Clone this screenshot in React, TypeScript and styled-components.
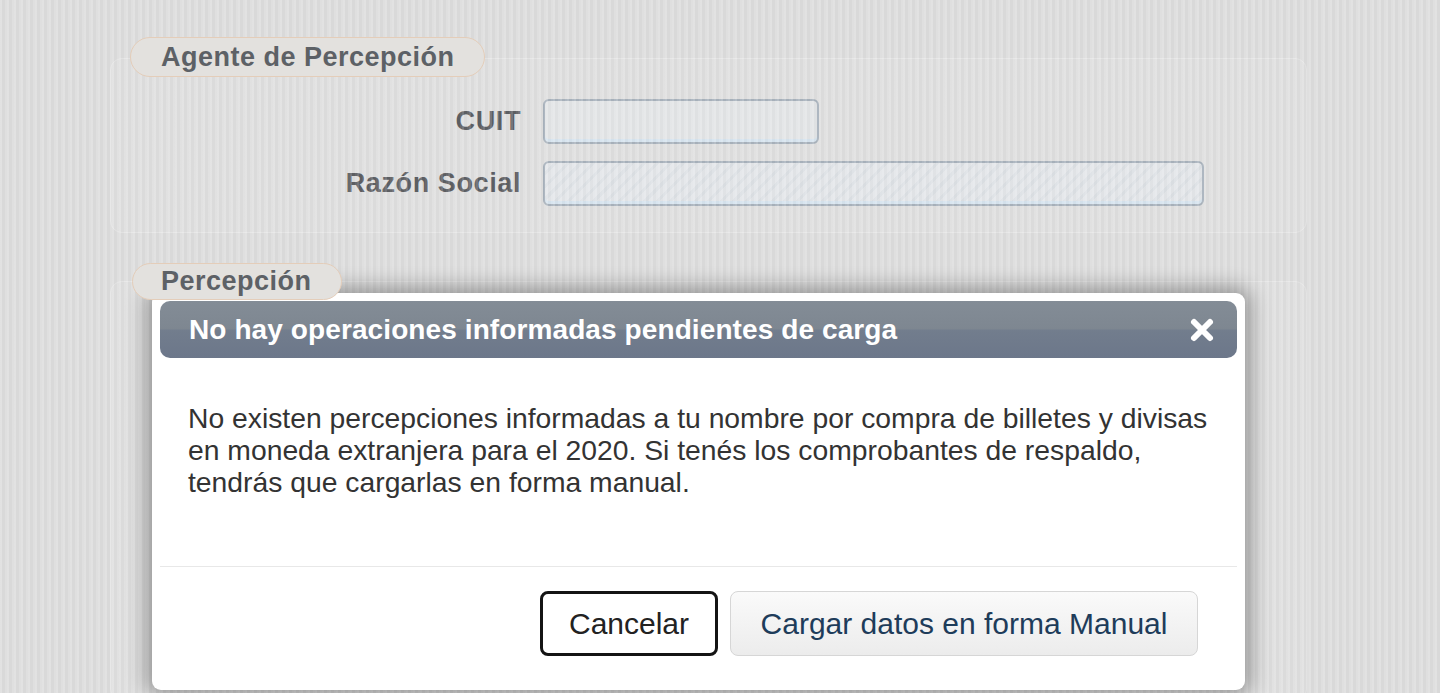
import React from "react";
import styled, { createGlobalStyle } from "styled-components";

const Global = createGlobalStyle`
  html, body { margin: 0; padding: 0; }
  body {
    width: 1440px;
    height: 693px;
    overflow: hidden;
    background: #dddddd;
    font-family: "Liberation Sans", Arial, sans-serif;
  }
`;

const Screen = styled.div`
  position: relative;
  width: 1440px;
  height: 693px;
  overflow: hidden;
  background: #dddddd;
`;

const Page = styled.div`
  display: flex;
  flex-direction: column;
  padding: 37px 133px 0 110px;
`;

const Section = styled.section<{ $gap?: number }>`
  display: flex;
  flex-direction: column;
  margin-top: ${(p) => p.$gap ?? 0}px;
`;

const Legend = styled.div<{ $w: number; $h: number; $ml: number }>`
  align-self: flex-start;
  position: relative;
  z-index: 1;
  width: ${(p) => p.$w}px;
  height: ${(p) => p.$h}px;
  margin-left: ${(p) => p.$ml}px;
  margin-bottom: -19px;
  box-sizing: border-box;
  padding-left: ${(p) => 160 - 110 - p.$ml}px;
  display: flex;
  align-items: center;
  border: 1px solid #e4cdb9;
  border-radius: 20px;
  background: #e3e1de;
  color: #5d6166;
  font-weight: bold;
  font-size: 27px;
  letter-spacing: 0.5px;
`;

const Box = styled.div<{ $h: number }>`
  height: ${(p) => p.$h}px;
  box-sizing: border-box;
  border: 1px solid #e7e7e7;
  border-radius: 12px;
  background: #dfdfdf;
  padding: 40px 0 0 0;
  display: flex;
  flex-direction: column;
  gap: 17px;
`;

const Row = styled.div`
  display: grid;
  grid-template-columns: 410px auto;
  column-gap: 22px;
  align-items: center;
`;

const Label = styled.label`
  text-align: right;
  color: #5e6064;
  font-size: 27px;
  font-weight: bold;
  letter-spacing: 0.6px;
`;

const Input = styled.div<{ $w: number; $hatched?: boolean }>`
  width: ${(p) => p.$w}px;
  height: 45px;
  box-sizing: border-box;
  border: 2px solid #a9b3bd;
  border-radius: 6px;
  background: ${(p) =>
    p.$hatched
      ? "repeating-linear-gradient(135deg, #e4e7ea 0 6px, #dde1e5 6px 9px)"
      : "#e3e5e7"};
  box-shadow: inset 0 -3px 0 #d7e4ef;
`;

const Stripes = styled.div`
  position: absolute;
  inset: 0;
  pointer-events: none;
  background: repeating-linear-gradient(
    90deg,
    rgba(255, 255, 255, 0.14) 0 2px,
    rgba(0, 0, 0, 0.02) 2px 5px,
    rgba(255, 255, 255, 0.06) 5px 7px
  );
`;

const Dialog = styled.div`
  position: absolute;
  left: 152px;
  top: 293px;
  width: 1093px;
  height: 397px;
  box-sizing: border-box;
  background: #ffffff;
  border-radius: 9px;
  box-shadow: 0 0 20px 6px rgba(0, 0, 0, 0.33);
  display: flex;
  flex-direction: column;
`;

const TitleBar = styled.div`
  margin: 8px 8px 0 8px;
  height: 57px;
  border-radius: 10px;
  background: linear-gradient(
    to bottom,
    #838c96 0%,
    #7e8791 48%,
    #727d8d 52%,
    #6c778a 100%
  );
  display: flex;
  align-items: center;
  justify-content: space-between;
  padding: 0 22px 0 29px;
`;

const Title = styled.h1`
  margin: 0;
  color: #ffffff;
  font-size: 28px;
  font-weight: bold;
  letter-spacing: 0.1px;
`;

const CloseButton = styled.button`
  width: 26px;
  height: 26px;
  padding: 0;
  border: none;
  background: transparent;
  display: flex;
  align-items: center;
  justify-content: center;
`;

const Body = styled.div`
  height: 208px;
  box-sizing: border-box;
  padding: 44px 36px 0 36px;
  color: #333333;
  font-size: 28.3px;
  line-height: 32px;
`;

const ButtonPane = styled.div`
  margin: 0 8px;
  border-top: 1px solid #e8e8e8;
  display: flex;
  justify-content: flex-end;
  gap: 12px;
  padding: 24px 39px 0 0;
`;

const Button = styled.button<{ $primary?: boolean }>`
  height: 65px;
  box-sizing: border-box;
  border-radius: 8px;
  font-family: "Liberation Sans", Arial, sans-serif;
  font-size: 30px;
  cursor: pointer;
  ${(p) =>
    p.$primary
      ? `
    width: 468px;
    border: 1px solid #d6d6d6;
    background: linear-gradient(to bottom, #fafafa, #ececec);
    color: #1e3c5a;
  `
      : `
    width: 178px;
    border: 3px solid #141414;
    background: #ffffff;
    color: #222222;
  `}
`;

export default function App() {
  return (
    <>
      <Global />
      <Screen>
        <Page>
          <Section>
            <Legend $w={355} $h={40} $ml={20}>
              Agente de Percepción
            </Legend>
            <Box $h={175}>
              <Row>
                <Label>CUIT</Label>
                <Input $w={276} />
              </Row>
              <Row>
                <Label>Razón Social</Label>
                <Input $w={661} $hatched />
              </Row>
            </Box>
          </Section>
          <Section $gap={30}>
            <Legend $w={210} $h={37} $ml={22}>
              Percepción
            </Legend>
            <Box $h={420} />
          </Section>
        </Page>
        <Stripes />
        <Dialog role="dialog">
          <TitleBar>
            <Title>No hay operaciones informadas pendientes de carga</Title>
            <CloseButton aria-label="Cerrar">
              <svg width="26" height="26" viewBox="0 0 26 26">
                <path
                  d="M5 5 L21 21 M21 5 L5 21"
                  stroke="#ffffff"
                  strokeWidth="6"
                  strokeLinecap="round"
                />
              </svg>
            </CloseButton>
          </TitleBar>
          <Body>
            No existen percepciones informadas a tu nombre por compra de billetes y divisas
            <br />
            en moneda extranjera para el 2020. Si tenés los comprobantes de respaldo,
            <br />
            tendrás que cargarlas en forma manual.
          </Body>
          <ButtonPane>
            <Button>Cancelar</Button>
            <Button $primary>Cargar datos en forma Manual</Button>
          </ButtonPane>
        </Dialog>
      </Screen>
    </>
  );
}
